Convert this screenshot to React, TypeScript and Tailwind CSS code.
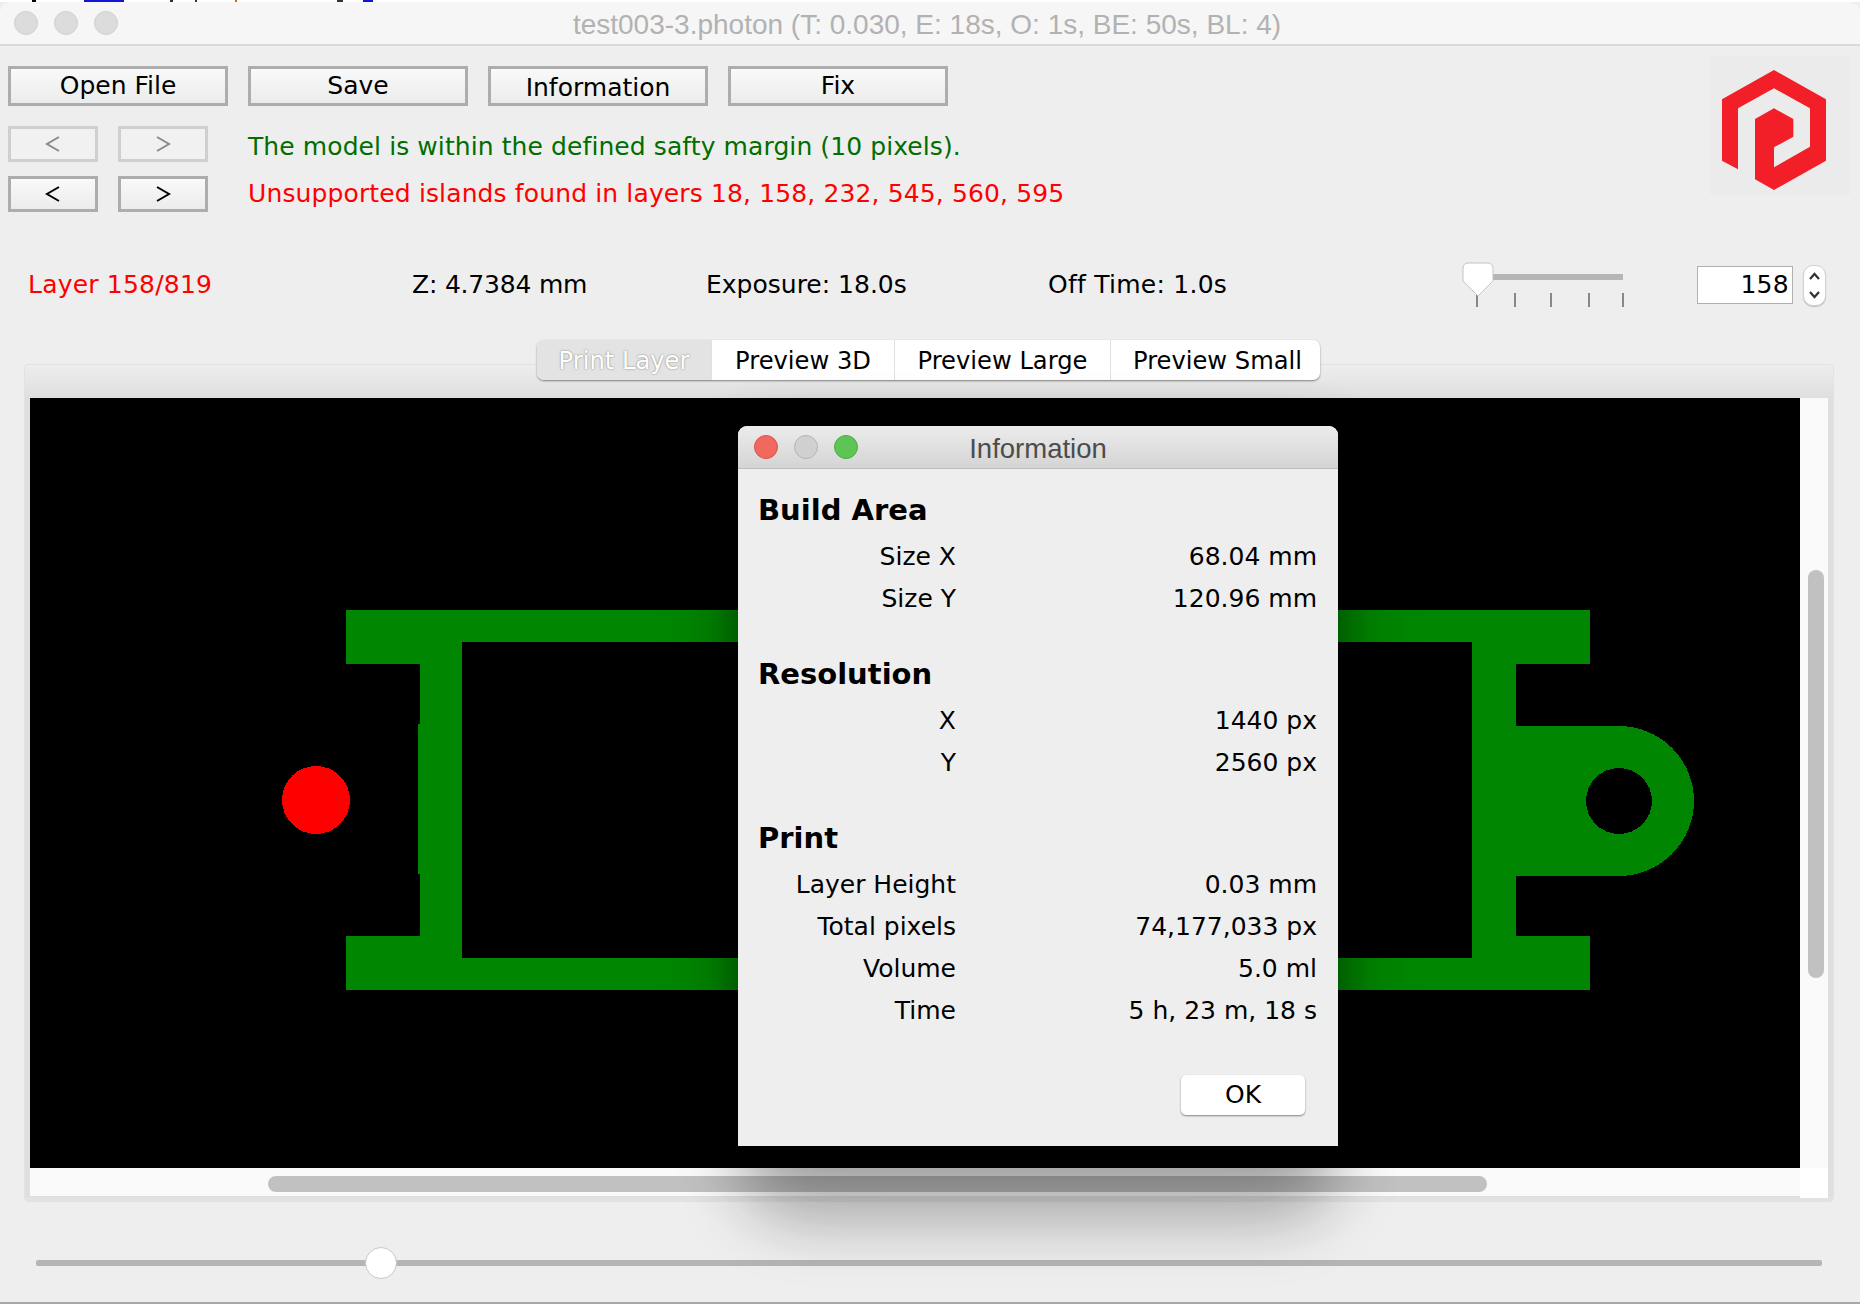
import React from "react";

const F = "font-['DejaVu_Sans',sans-serif]";

function Btn({ label, extra = "" }: { label: string; extra?: string }) {
  return (
    <div className={`w-[220px] h-[40px] border-[3px] border-[#adadad] bg-gradient-to-b from-[#f9f9f9] to-[#ececec] flex items-center justify-center text-[25px] text-black ${extra}`}>
      {label}
    </div>
  );
}

function Nav({ dir, off }: { dir: string; off?: boolean }) {
  return (
    <div className={`w-[90px] h-[36px] border-[3px] flex items-center justify-center ${off ? "border-[#cfcfcf] bg-[#f1f1f1]" : "border-[#adadad] bg-gradient-to-b from-[#f9f9f9] to-[#ececec]"}`}>
      <svg width="16" height="16" viewBox="0 0 16 16" fill="none" stroke={off ? "#8a8a8a" : "#000"} strokeWidth="2">
        {dir === "l" ? <path d="M14 1 2 8l12 7" /> : <path d="M2 1l12 7-12 7" />}
      </svg>
    </div>
  );
}

function Lights({ on }: { on?: boolean }) {
  const cls = on
    ? ["bg-[#f0685e] border-[#d9534a]", "bg-[#d0d0d0] border-[#b5b5b5]", "bg-[#5ec455] border-[#4cae44]"]
    : ["bg-[#dcdcdc] border-[#d0d0d0]", "bg-[#dcdcdc] border-[#d0d0d0]", "bg-[#dcdcdc] border-[#d0d0d0]"];
  return (
    <div className="flex gap-[16px]">
      {cls.map((c, i) => (
        <div key={i} className={`w-[24px] h-[24px] rounded-full border ${c}`} />
      ))}
    </div>
  );
}

function Row({ k, v }: { k: string; v: string }) {
  return (
    <div className="h-[42px] flex items-center text-[25px] text-black">
      <div className="w-[218px] text-right">{k}</div>
      <div className="w-[361px] text-right">{v}</div>
    </div>
  );
}

function Section({ title, rows }: { title: string; rows: [string, string][] }) {
  return (
    <div>
      <div className="h-[42px] pl-[20px] pt-[2px] flex items-center text-[29px] font-bold text-black">{title}</div>
      <div className="mt-[5px]">
        {rows.map(([k, v]) => (
          <Row key={k} k={k} v={v} />
        ))}
      </div>
    </div>
  );
}

export default function App() {
  return (
    <div className={`${F} relative w-[1860px] h-[1304px] overflow-hidden bg-[#eeeeee]`}>
      {/* sliver of the window behind */}
      <div className="h-[2px] bg-white flex overflow-hidden">
        <div className="ml-[32px] w-[4px] bg-black" />
        <div className="ml-[48px] w-[40px] bg-[#1414d8]" />
        <div className="ml-[46px] w-[3px] bg-[#333333]" />
        <div className="ml-[22px] w-[2px] bg-[#333333]" />
        <div className="ml-[38px] w-[2px] bg-[#b07a00]" />
        <div className="ml-[100px] w-[6px] bg-[#333333]" />
        <div className="ml-[20px] w-[10px] bg-[#1414d8]" />
      </div>

      {/* title bar */}
      <div className="h-[44px] rounded-t-[10px] bg-[#f6f6f6] border-b-2 border-[#dadada] flex items-center pl-[14px] relative">
        <Lights />
        <div className="absolute inset-0 pt-[3px] pr-[6px] flex items-center justify-center font-['Liberation_Sans',sans-serif] text-[28px] text-[#b2b2b2]">
          test003-3.photon (T: 0.030, E: 18s, O: 1s, BE: 50s, BL: 4)
        </div>
      </div>

      {/* toolbar */}
      <div className="flex h-[150px]">
        <div className="pl-[8px] pt-[20px] flex-1">
          <div className="flex gap-[20px]">
            <Btn label="Open File" />
            <Btn label="Save" />
            <Btn label="Information" extra="pt-[4px]" />
            <Btn label="Fix" />
          </div>
          <div className="mt-[20px] h-[36px] flex items-center">
            <div className="flex gap-[20px]"><Nav dir="l" off /><Nav dir="r" off /></div>
            <div className="ml-[40px] mt-[6px] text-[25px] tracking-[0.09px] text-[#006e00]">The model is within the defined safty margin (10 pixels).</div>
          </div>
          <div className="mt-[14px] h-[36px] flex items-center">
            <div className="flex gap-[20px]"><Nav dir="l" /><Nav dir="r" /></div>
            <div className="ml-[40px] text-[25px] tracking-[0.13px] text-[#ff0000]">Unsupported islands found in layers 18, 158, 232, 545, 560, 595</div>
          </div>
        </div>
        <div className="mt-[10px] mr-[10px] w-[140px] h-[139px] bg-[#ebebeb]">
          <svg width="140" height="139" viewBox="930 48 420 417">
            <polygon fill="#f21e28" points="1122,90 1278,178 1278,362 1122,450 1065,418 1065,237 1122,205 1180,237 1180,290 1122,322 1122,382 1230,320 1230,205 1122,145 1014,205 1014,388 966,362 966,178" />
          </svg>
        </div>
      </div>

      {/* status row */}
      <div className="mt-[59px] h-[60px] flex items-center text-[25px] text-black relative">
        <div className="ml-[28px] w-[384px] tracking-[0.2px] text-[#ff0000]">Layer 158/819</div>
        <div className="w-[294px] tracking-[-0.2px]">Z: 4.7384 mm</div>
        <div className="w-[342px]">Exposure: 18.0s</div>
        <div className="w-[414px] tracking-[0.25px]">Off Time: 1.0s</div>
        <div className="relative w-[235px] h-[60px]">
          <div className="absolute left-[31px] top-[19px] w-[130px] h-[6px] bg-[#b5b5b5]" />
          {[14, 52, 88, 126, 160].map((x) => (
            <div key={x} className="absolute top-[38px] w-[2px] h-[14px] bg-[#888888]" style={{ left: x }} />
          ))}
          <svg className="absolute left-0 top-[7px]" width="32" height="36" viewBox="0 0 32 36">
            <path d="M6 1h20a5 5 0 0 1 5 5v13L16 34 1 19V6a5 5 0 0 1 5-5z" fill="#fff" stroke="#c4c4c4" />
          </svg>
        </div>
        <div className="w-[96px] h-[38px] bg-white border border-[#b0b0b0] flex items-center justify-end pr-[3px] tracking-[0.3px]">158</div>
        <div className="ml-[10px] w-[23px] h-[41px] bg-white rounded-[10px] border border-[#d0d0d0] shadow-[0_1px_1px_rgba(0,0,0,0.2)] flex items-center justify-center">
          <svg width="13" height="31" viewBox="0 0 13 31" fill="none" stroke="#333" strokeWidth="2.2">
            <path d="M2 9l4.500-5L11 9M2 22l4.500 5L11 22" />
          </svg>
        </div>
      </div>

      {/* tabbed panel */}
      <div className="relative mt-[49px] ml-[24px] w-[1810px] h-[838px] rounded-[5px] border border-[#e2e2e2] border-b-[5px] bg-gradient-to-b from-[#ededed] from-0% to-[#dfdfdf] to-[4%]">
        <div className="-mt-[25px] ml-[512px] w-[783px] h-[40px] flex rounded-[7px] bg-white shadow-[0_1px_2px_rgba(0,0,0,0.45)] overflow-hidden text-[24.2px] text-black">
          <div className="w-[174px] pt-[3px] bg-[#e3e3e3] flex items-center justify-center text-white [text-shadow:0_0_2px_#777777]">Print Layer</div>
          <div className="w-[183px] pt-[3px] border-l border-[#e0e0e0] flex items-center justify-center">Preview 3D</div>
          <div className="w-[216px] pt-[3px] border-l border-[#e0e0e0] flex items-center justify-center">Preview Large</div>
          <div className="w-[210px] pt-[3px] pl-[4px] border-l border-[#e0e0e0] flex items-center justify-center">Preview Small</div>
        </div>
        <div className="mt-[18px] ml-[5px] flex">
          <div className="w-[1770px] h-[770px] bg-black">
            <svg width="1770" height="770" viewBox="30 398 1770 770" shapeRendering="crispEdges">
              <circle cx="316" cy="800" r="34" fill="#ff0000" />
              <path
                fill="#008600"
                d="M346 610H1590V664H1516V726H1619A75 75 0 0 1 1619 876H1516V936H1590V990H346V936H420V874H418V724H420V664H346Z"
              />
              <path fill="#000" d="M462 642H1472V958H462Z" />
              <circle cx="1619" cy="801" r="33" fill="#000" />
            </svg>
          </div>
          <div className="w-[28px] h-[770px] bg-[#fafafa] pl-[8px] pt-[172px]">
            <div className="w-[16px] h-[408px] rounded-full bg-[#c1c1c1]" />
          </div>
        </div>
        <div className="ml-[5px] flex">
          <div className="w-[1770px] h-[28px] bg-[#fafafa] pl-[238px] pt-[8px]">
            <div className="w-[1219px] h-[16px] rounded-full bg-[#c1c1c1]" />
          </div>
          <div className="w-[28px] h-[30px] bg-white" />
        </div>
      </div>

      {/* bottom slider */}
      <div className="relative mt-[58px] ml-[36px] w-[1786px] h-[6px] rounded-[2px] bg-[#b5b5b5]">
        <div className="absolute left-[329px] -top-[13px] w-[32px] h-[32px] rounded-full bg-white border border-[#c8c8c8]" />
      </div>
      <div className="absolute left-0 right-0 bottom-0 h-[2px] bg-[#a8a8a8]" />

      {/* dialog */}
      <div className="absolute left-[738px] top-[426px] w-[600px] h-[720px]">
        <div className="absolute inset-0 rounded-t-[9px] rounded-b-[60px] shadow-[0_0_44px_rgba(0,0,0,0.3),0_76px_64px_-2px_rgba(0,0,0,0.28),0_30px_110px_rgba(0,0,0,0.07)]" />
        <div className="relative h-full rounded-t-[9px] bg-[#eeeeee]">
          <div className="h-[43px] rounded-t-[9px] bg-gradient-to-b from-[#ececec] to-[#d4d4d4] border-b border-[#bdbdbd] flex items-center pl-[16px] relative">
            <Lights on />
            <div className="absolute inset-0 pt-[3px] flex items-center justify-center text-[27.5px] text-[#4c4c4c] font-['Liberation_Sans',sans-serif]">Information</div>
          </div>
          <div className="pt-[20px] flex flex-col gap-[33px]">
            <Section title="Build Area" rows={[["Size X", "68.04 mm"], ["Size Y", "120.96 mm"]]} />
            <Section title="Resolution" rows={[["X", "1440 px"], ["Y", "2560 px"]]} />
            <Section
              title="Print"
              rows={[
                ["Layer Height", "0.03 mm"],
                ["Total pixels", "74,177,033 px"],
                ["Volume", "5.0 ml"],
                ["Time", "5 h, 23 m, 18 s"],
              ]}
            />
          </div>
          <div className="mt-[43px] ml-[443px] w-[124px] h-[40px] rounded-[5px] bg-white shadow-[0_1px_2px_rgba(0,0,0,0.45)] flex items-center justify-center text-[25px] text-black">OK</div>
        </div>
      </div>
    </div>
  );
}
